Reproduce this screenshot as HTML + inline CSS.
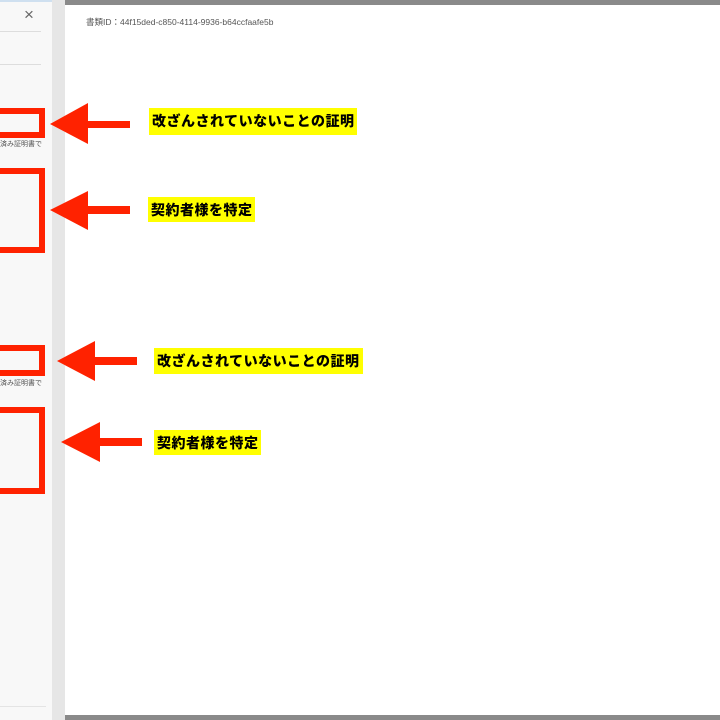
<!DOCTYPE html>
<html><head><meta charset="utf-8"><style>
body{margin:0;width:720px;height:720px;overflow:hidden;background:#fff;position:relative;font-family:"Liberation Sans","Noto Sans CJK JP",sans-serif}
div{position:absolute;box-sizing:border-box}
.box{border:6px solid #ff2200}
.lab{background:#ffff00;font-weight:900;font-size:14px;color:#000;line-height:26px;padding-left:3px;white-space:nowrap;letter-spacing:0.5px}
.sm{font-size:7px;color:#555;white-space:nowrap}
</style></head><body>
<div style="left:0;top:0;width:52px;height:720px;background:#f8f8f8"></div>
<div style="left:0;top:0;width:52px;height:2px;background:#cfe0f0"></div>
<div style="left:52px;top:0;width:13px;height:720px;background:#e6e6e6"></div>
<div style="left:65px;top:0;width:655px;height:5px;background:#8a8a8a"></div>
<div style="left:65px;top:715px;width:655px;height:5px;background:#8a8a8a"></div>
<div style="left:24px;top:5px;font-size:17px;color:#666">×</div>
<div style="left:0;top:31px;width:41px;height:1px;background:#ddd"></div>
<div style="left:0;top:64px;width:41px;height:1px;background:#ddd"></div>
<div style="left:0;top:706px;width:46px;height:1px;background:#e4e4e4"></div>
<div style="left:86px;top:16px;font-size:8.5px;color:#555">書類ID：44f15ded-c850-4114-9936-b64ccfaafe5b</div>
<div class="box" style="left:-6px;top:108px;width:51px;height:30px"></div>
<div class="sm" style="left:0;top:139px">済み証明書で</div>
<div class="box" style="left:-6px;top:168px;width:51px;height:85px"></div>
<div class="box" style="left:-6px;top:345px;width:51px;height:31px"></div>
<div class="sm" style="left:0;top:378px">済み証明書で</div>
<div class="box" style="left:-6px;top:407px;width:51px;height:87px"></div>
<svg style="position:absolute;left:0;top:0" width="720" height="720">
<g fill="#ff2200">
<polygon points="50,124 88,103 88,121 130,121 130,128 88,128 88,144"/>
<polygon points="50,210 88,191 88,206 130,206 130,214 88,214 88,230"/>
<polygon points="57,361 95,341 95,357 137,357 137,365 95,365 95,381"/>
<polygon points="61,442 100,422 100,438 142,438 142,446 100,446 100,462"/>
</g></svg>
<div class="lab" style="left:149px;top:108px;width:208px;height:27px">改ざんされていないことの証明</div>
<div class="lab" style="left:148px;top:197px;width:107px;height:25px">契約者様を特定</div>
<div class="lab" style="left:154px;top:348px;width:209px;height:26px">改ざんされていないことの証明</div>
<div class="lab" style="left:154px;top:430px;width:107px;height:25px">契約者様を特定</div>
</body></html>
